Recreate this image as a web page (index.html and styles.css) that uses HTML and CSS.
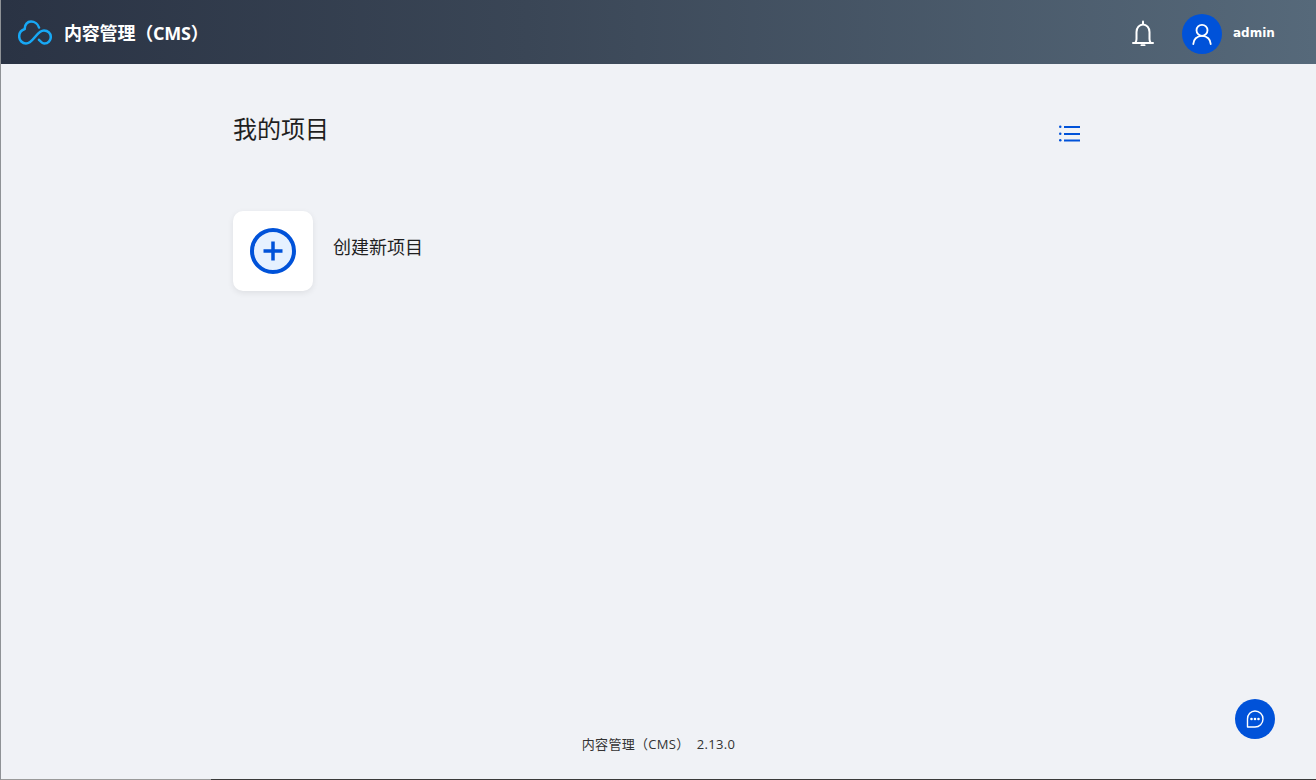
FILE: index.html
```html
<!DOCTYPE html>
<html lang="zh-CN">
<head>
    <meta charset="UTF-8">
    <title>内容管理（CMS）</title>
    <link rel="stylesheet" href="styles.css">
</head>
<body>
    <div class="app">
        <header class="topbar">
            <div class="brand">
                <svg class="brand-logo" viewBox="0 0 34 26" fill="none" stroke="#17a8f5" stroke-width="2.500" stroke-linecap="round" stroke-linejoin="round">
                    <path d="M21 7.500C20 4 16.500 1.500 13 1.500C9.500 1.500 6.500 4.500 6.800 9C3.500 10 1.200 13 1.200 16.500C1.200 20.500 4.500 23.500 8 23.500C12 23.500 14.500 20 17 17C19.500 14 22 10.500 26 10.500C30 10.500 32.800 13.500 32.800 17C32.800 20.500 30 23.500 26.500 23.500C24 23.500 22.500 21.500 21 19.800"/>
                </svg>
                <span class="brand-name">内容管理（CMS）</span>
            </div>
            <div class="user-area">
                <svg class="bell" viewBox="0 0 24 26" fill="none" stroke="#fff" stroke-width="2" stroke-linecap="round" stroke-linejoin="round">
                    <path d="M12 1.500v2.500"/>
                    <path d="M4.500 22.500c.6-1 1-2 1-3.500v-7a6.500 7.500 0 0 1 13 0v7c0 1.500.4 2.500 1 3.500"/>
                    <path d="M2 23h20"/>
                    <path d="M10.500 25.200h3"/>
                </svg>
                <div class="avatar">
                    <svg viewBox="0 0 24 24" fill="none" stroke="#fff" stroke-width="2" stroke-linecap="round">
                        <circle cx="12" cy="8" r="6"/>
                        <path d="M2.500 23c0-5 4-9 9.500-9s9.500 4 9.500 9"/>
                    </svg>
                </div>
                <span class="user-name">admin</span>
            </div>
        </header>

        <main class="content">
            <div class="title-row">
                <h1>我的项目</h1>
                <svg class="list-icon" viewBox="0 0 21 18" fill="#0052d9">
                    <rect x="0" y="1.500" width="2.500" height="2.500" rx="1.250"/>
                    <rect x="5" y="2" width="16" height="2"/>
                    <rect x="0" y="8.500" width="2.500" height="2.500" rx="1.250"/>
                    <rect x="5" y="9" width="16" height="2"/>
                    <rect x="0" y="15" width="2.500" height="2.500" rx="1.250"/>
                    <rect x="5" y="15.500" width="16" height="2"/>
                </svg>
            </div>
            <div class="project-list">
                <div class="project-item">
                    <div class="project-card">
                        <svg viewBox="0 0 46 46">
                            <circle cx="23" cy="23" r="21" fill="#e6f1ff" stroke="#0052d9" stroke-width="4"/>
                            <path d="M23 13.500v19M13.500 23h19" stroke="#0052d9" stroke-width="3.500" fill="none"/>
                        </svg>
                    </div>
                    <span class="project-label">创建新项目</span>
                </div>
            </div>
        </main>

        <footer class="page-footer">内容管理（CMS） &nbsp;2.13.0</footer>
        <div class="window-edge"></div>
    </div>

    <button class="chat-btn" type="button">
        <svg viewBox="0 0 18 18" fill="none" stroke="#fff" stroke-width="1.400" stroke-linejoin="round">
            <path d="M9 1a8 8 0 1 1 0 16H1.500V9A7.500 8 0 0 1 9 1z"/>
            <circle cx="5.500" cy="9" r=".6" fill="#fff"/>
            <circle cx="9" cy="9" r=".6" fill="#fff"/>
            <circle cx="12.500" cy="9" r=".6" fill="#fff"/>
        </svg>
    </button>
</body>
</html>
```

FILE: styles.css
```css
* {
    box-sizing: border-box;
}

html, body {
    height: 100%;
}

body {
    margin: 0;
    font-family: "Open Sans", "Noto Sans CJK SC", sans-serif;
    background-color: #f0f2f6;
    color: #1f1f1f;
    overflow: hidden;
}

.app {
    height: 780px;
    display: flex;
    flex-direction: column;
    border-left: 1px solid #8f9296;
}

.topbar {
    height: 64px;
    flex-shrink: 0;
    display: flex;
    justify-content: space-between;
    align-items: center;
    padding: 0 41px 0 17px;
    background: linear-gradient(90deg, #2a3344 0%, #3a4656 40%, #56697a 100%);
    color: #fff;
}

.brand {
    display: flex;
    align-items: center;
    gap: 12px;
}

.brand-logo {
    width: 34px;
    height: 26px;
    margin-top: 1px;
}

.brand-name {
    font-size: 18px;
    font-weight: 700;
    letter-spacing: -0.2px;
}

.user-area {
    display: flex;
    align-items: center;
    padding-top: 1px;
}

.bell {
    width: 24px;
    height: 26px;
    margin-right: 27px;
}

.avatar {
    width: 40px;
    height: 40px;
    border-radius: 50%;
    background-color: #0052d9;
    display: flex;
    align-items: center;
    justify-content: center;
    margin: 2px 11px 0 0;
}

.avatar svg {
    width: 22px;
    height: 22px;
}

.user-name {
    font-size: 12px;
    font-weight: 700;
    font-family: "DejaVu Sans", sans-serif;
    width: 42px;
}

.content {
    flex: 1;
    width: 850px;
    margin-left: 232px;
}

.title-row {
    display: flex;
    justify-content: space-between;
    align-items: flex-start;
    padding-top: 47px;
}

h1 {
    margin: 0;
    font-size: 24px;
    font-weight: 400;
    line-height: 36px;
}

.list-icon {
    width: 21px;
    height: 18px;
    margin: 13px 3px 0 0;
}

.project-list {
    margin-top: 64px;
}

.project-item {
    display: flex;
    align-items: center;
    gap: 20px;
}

.project-card {
    width: 80px;
    height: 80px;
    background-color: #fff;
    border-radius: 10px;
    box-shadow: 0 2px 6px rgba(0, 0, 0, 0.08);
    display: flex;
    align-items: center;
    justify-content: center;
}

.project-card svg {
    width: 46px;
    height: 46px;
}

.project-label {
    font-size: 18px;
    margin-top: -11px;
}

.page-footer {
    text-align: center;
    font-size: 13px;
    line-height: 20px;
    letter-spacing: 0.3px;
    padding-bottom: 25px;
    color: #333;
}

.window-edge {
    height: 1px;
    flex-shrink: 0;
    background: linear-gradient(90deg, #9a9a9a 210px, #3a3a3a 210px);
}

.chat-btn {
    position: fixed;
    right: 41px;
    bottom: 41px;
    width: 40px;
    height: 40px;
    padding: 0;
    border: 0;
    border-radius: 50%;
    background-color: #0052d9;
    display: flex;
    align-items: center;
    justify-content: center;
}

.chat-btn svg {
    width: 18px;
    height: 18px;
}
```
